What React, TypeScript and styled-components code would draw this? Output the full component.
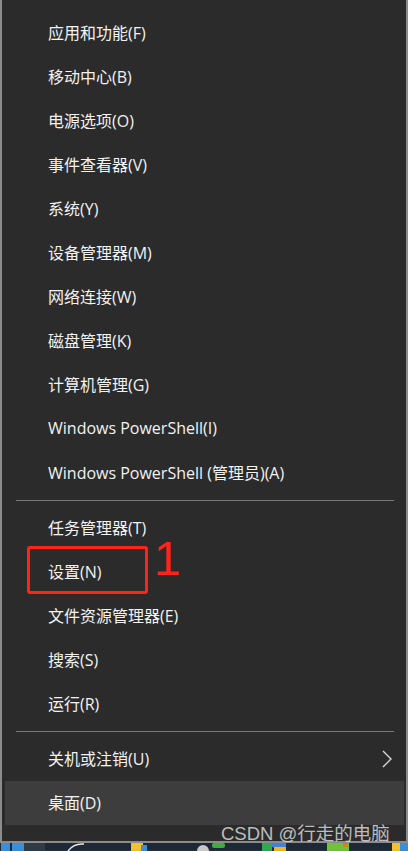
import styled, { createGlobalStyle } from 'styled-components';

const GlobalStyle = createGlobalStyle`
  html, body {
    margin: 0;
    padding: 0;
    background: #f0f0f0;
  }
`;

const groups = [
  [
    '应用和功能(F)',
    '移动中心(B)',
    '电源选项(O)',
    '事件查看器(V)',
    '系统(Y)',
    '设备管理器(M)',
    '网络连接(W)',
    '磁盘管理(K)',
    '计算机管理(G)',
    'Windows PowerShell(I)',
    'Windows PowerShell (管理员)(A)',
  ],
  ['任务管理器(T)', '设置(N)', '文件资源管理器(E)', '搜索(S)', '运行(R)'],
  ['关机或注销(U)', '桌面(D)'],
];

const Page = styled.div`
  position: relative;
  width: 408px;
  height: 851px;
  display: flex;
  flex-direction: column;
  overflow: hidden;
  font-family: 'Open Sans', 'Noto Sans CJK SC', sans-serif;
`;

const Menu = styled.div`
  height: 835px;
  display: flex;
  flex-direction: column;
  padding: 11px 0 0;
  background: #2b2b2b;
  border: 2px solid #8c8c8c;
  border-top: none;
`;

const Item = styled.div<{ $active?: boolean }>`
  position: relative;
  height: 44px;
  box-sizing: border-box;
  margin: 0 2px 0 3px;
  padding: 0 0 3px 43px;
  display: flex;
  align-items: center;
  justify-content: space-between;
  font-size: 16px;
  color: #f2f2f2;
  background: ${(p) => (p.$active ? '#3d3d3d' : 'transparent')};
`;

const Separator = styled.div`
  height: 11px;
  display: flex;
  align-items: center;
  padding: 0 12px 0 14px;

  &::after {
    content: '';
    flex: 1;
    height: 1px;
    background: #7a7a7a;
  }
`;

const Chevron = styled.svg`
  width: 12px;
  height: 18px;
  margin: 3px 11px 0 0;
`;

// red annotation drawn over the "设置" row
const Highlight = styled.div`
  position: absolute;
  left: 22px;
  top: -4px;
  width: 115px;
  height: 42px;
  border: 3px solid #ff2318;
  border-radius: 3px;
`;

const Marker = styled.span`
  position: absolute;
  left: 149px;
  top: -16px;
  font-family: 'Liberation Sans', Arial, sans-serif;
  font-size: 49px;
  line-height: 1;
  color: #ff2318;
`;

const Taskbar = styled.svg`
  display: block;
  width: 408px;
  height: 8px;
`;

const Footer = styled.div`
  flex: 1;
  background: #f0f0f0;
`;

const Watermark = styled.div`
  position: absolute;
  left: 221px;
  top: 819px;
  font-family: 'Liberation Sans', 'Noto Sans CJK SC', sans-serif;
  font-size: 18.5px;
  color: rgba(230, 230, 230, 0.78);
  white-space: nowrap;
`;

const App = () => {
  return (
    <Page>
      <GlobalStyle />
      <Menu>
        {groups.map((group, gi) => (
          <div key={gi}>
            {gi > 0 && <Separator />}
            {group.map((label) => (
              <Item key={label} $active={label === '桌面(D)'}>
                <span>{label}</span>
                {label === '设置(N)' && (
                  <>
                    <Highlight />
                    <Marker>1</Marker>
                  </>
                )}
                {label === '关机或注销(U)' && (
                  <Chevron viewBox="0 0 12 18">
                    <path d="M2 1 L10 9 L2 17" fill="none" stroke="#d8d8d8" strokeWidth="1.4" />
                  </Chevron>
                )}
              </Item>
            ))}
          </div>
        ))}
      </Menu>
      <Taskbar viewBox="0 0 408 8" preserveAspectRatio="none">
        <rect x="0" y="0" width="408" height="8" fill="#1d2936" />
        <rect x="1" y="0" width="9" height="8" fill="#3a8fdc" />
        <rect x="12" y="0" width="12" height="8" fill="#3a8fdc" />
        <rect x="24" y="0" width="21" height="8" fill="#2f3c48" />
        <path d="M68 8 Q74 0 84 1" fill="none" stroke="#e8e8e8" strokeWidth="1.5" />
        <rect x="131" y="0" width="12" height="8" fill="#f2c12e" />
        <rect x="141" y="2" width="6" height="6" fill="#3a8fdc" />
        <circle cx="203" cy="8" r="6" fill="#c8c8c8" />
        <rect x="212" y="0" width="13" height="5" rx="2" fill="#3fae3f" />
        <rect x="262" y="0" width="10" height="8" fill="#2fa84f" />
        <path d="M272 0 h14 v4 q-7 3 -14 0z" fill="#3d82e0" />
        <rect x="274" y="4" width="12" height="4" fill="#f3b71c" />
        <rect x="327" y="0" width="22" height="8" fill="#6fc23a" />
        <rect x="343" y="0" width="5" height="4" fill="#e27a1c" />
        <rect x="392" y="0" width="8" height="8" fill="#f2c12e" />
        <rect x="400" y="0" width="8" height="8" fill="#3a8fdc" />
      </Taskbar>
      <Footer />
      <Watermark>CSDN @行走的电脑</Watermark>
    </Page>
  );
};

export default App;
